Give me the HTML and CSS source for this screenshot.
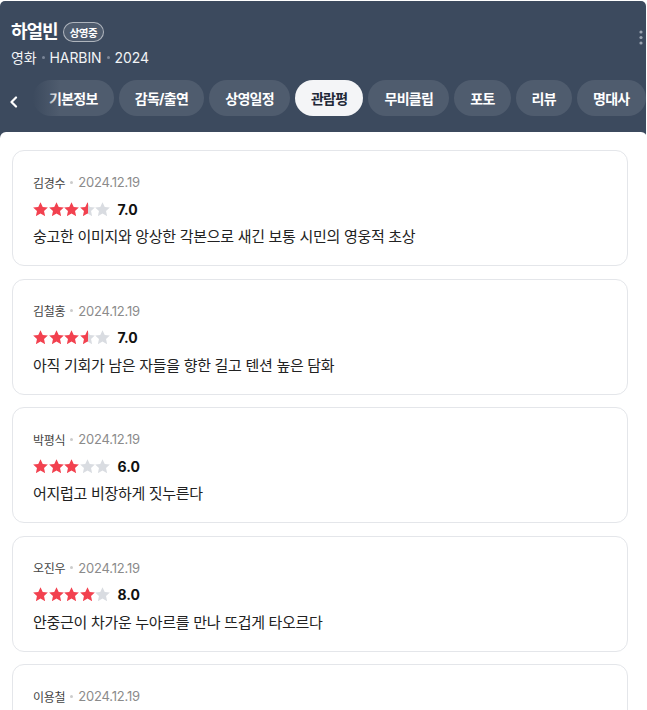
FILE: index.html
```html
<!DOCTYPE html>
<html lang="ko">
<head>
<meta charset="utf-8">
<title>하얼빈 관람평</title>
<link rel="stylesheet" href="styles.css">
</head>
<body>
<svg class="defs" width="0" height="0" aria-hidden="true">
  <defs>
    <linearGradient id="half" x1="0" x2="1" y1="0" y2="0">
      <stop offset="50%" stop-color="#f2414f"/>
      <stop offset="50%" stop-color="#d9dce1"/>
    </linearGradient>
    <symbol id="star" viewBox="1.6 1.4 20.8 20">
      <path d="M12 1.6l3.1 6.6 7.1.8-5.3 4.9 1.5 7.1L12 17.4 5.6 21l1.5-7.1L1.8 9l7.1-.8z"/>
    </symbol>
  </defs>
</svg>

<header class="header">
  <div class="header-top">
    <div class="heading">
      <div class="title-row">
        <h1 class="title">하얼빈</h1>
        <span class="badge">상영중</span>
      </div>
      <div class="subtitle">
        <span>영화</span><span class="sep"></span><span>HARBIN</span><span class="sep"></span><span>2024</span>
      </div>
    </div>
    <button class="kebab" aria-label="더보기">
      <svg width="4" height="15" viewBox="0 0 4 15"><circle cx="2" cy="2" r="1.6"/><circle cx="2" cy="7.5" r="1.6"/><circle cx="2" cy="13" r="1.6"/></svg>
    </button>
  </div>
  <nav class="tabs">
    <button class="prev" aria-label="이전">
      <svg width="10" height="12" viewBox="0 0 10 12"><path d="M7 1.5L2.5 6 7 10.5" fill="none" stroke="#fff" stroke-width="2.2" stroke-linecap="round" stroke-linejoin="round"/></svg>
    </button>
    <div class="strip">
      <span class="pill">기본정보</span>
      <span class="pill">감독/출연</span>
      <span class="pill">상영일정</span>
      <span class="pill active">관람평</span>
      <span class="pill">무비클립</span>
      <span class="pill">포토</span>
      <span class="pill">리뷰</span>
      <span class="pill">명대사</span>
    </div>
    <div class="fade"></div>
  </nav>
</header>

<main class="content">
  <article class="card">
    <div class="meta"><span class="name">김경수</span><span class="dot"></span><span class="date">2024.12.19</span></div>
    <div class="rating">
      <svg class="star full"><use href="#star"/></svg><svg class="star full"><use href="#star"/></svg><svg class="star full"><use href="#star"/></svg><svg class="star half"><use href="#star"/></svg><svg class="star empty"><use href="#star"/></svg>
      <span class="score">7.0</span>
    </div>
    <p class="text">숭고한 이미지와 앙상한 각본으로 새긴 보통 시민의 영웅적 초상</p>
  </article>
  <article class="card">
    <div class="meta"><span class="name">김철홍</span><span class="dot"></span><span class="date">2024.12.19</span></div>
    <div class="rating">
      <svg class="star full"><use href="#star"/></svg><svg class="star full"><use href="#star"/></svg><svg class="star full"><use href="#star"/></svg><svg class="star half"><use href="#star"/></svg><svg class="star empty"><use href="#star"/></svg>
      <span class="score">7.0</span>
    </div>
    <p class="text">아직 기회가 남은 자들을 향한 길고 텐션 높은 담화</p>
  </article>
  <article class="card">
    <div class="meta"><span class="name">박평식</span><span class="dot"></span><span class="date">2024.12.19</span></div>
    <div class="rating">
      <svg class="star full"><use href="#star"/></svg><svg class="star full"><use href="#star"/></svg><svg class="star full"><use href="#star"/></svg><svg class="star empty"><use href="#star"/></svg><svg class="star empty"><use href="#star"/></svg>
      <span class="score">6.0</span>
    </div>
    <p class="text">어지럽고 비장하게 짓누른다</p>
  </article>
  <article class="card">
    <div class="meta"><span class="name">오진우</span><span class="dot"></span><span class="date">2024.12.19</span></div>
    <div class="rating">
      <svg class="star full"><use href="#star"/></svg><svg class="star full"><use href="#star"/></svg><svg class="star full"><use href="#star"/></svg><svg class="star full"><use href="#star"/></svg><svg class="star empty"><use href="#star"/></svg>
      <span class="score">8.0</span>
    </div>
    <p class="text">안중근이 차가운 누아르를 만나 뜨겁게 타오르다</p>
  </article>
  <article class="card">
    <div class="meta"><span class="name">이용철</span><span class="dot"></span><span class="date">2024.12.19</span></div>
    <div class="rating">
      <svg class="star full"><use href="#star"/></svg><svg class="star full"><use href="#star"/></svg><svg class="star full"><use href="#star"/></svg><svg class="star empty"><use href="#star"/></svg><svg class="star empty"><use href="#star"/></svg>
      <span class="score">6.0</span>
    </div>
    <p class="text">무겁고 진지한 영웅의 초상</p>
  </article>
</main>
</body>
</html>
```

FILE: styles.css
```css
* { box-sizing: border-box; }

html, body {
  margin: 0;
  padding: 0;
  background: #fff;
}

body {
  font-family: Inter, "Noto Sans CJK KR", sans-serif;
  color: #222;
  overflow: hidden;
}

.defs {
  position: absolute;
  width: 0;
  height: 0;
}

button {
  font: inherit;
  border: 0;
  background: none;
  padding: 0;
  cursor: pointer;
}

.header {
  margin: 1px 1px 0 0;
  background: #3c4a5e;
  border-radius: 5px 5px 0 0;
  padding: 19px 0 22px;
}

.header-top {
  display: flex;
  justify-content: space-between;
  align-items: flex-start;
}

.heading {
  padding-left: 11px;
}

.title-row {
  display: flex;
  align-items: center;
  gap: 5px;
  height: 24px;
}

.title {
  margin: 0;
  font-size: 18px;
  font-weight: 700;
  letter-spacing: -1px;
  color: #fff;
  line-height: 24px;
}

.badge {
  display: inline-flex;
  align-items: center;
  height: 20px;
  padding: 0 6px;
  border: 1.5px solid rgba(255, 255, 255, 0.55);
  border-radius: 10px;
  background: rgba(255, 255, 255, 0.1);
  color: #fff;
  font-size: 10.5px;
  font-weight: 700;
  letter-spacing: -0.5px;
}

.subtitle {
  display: flex;
  align-items: center;
  margin-top: 3px;
  height: 20px;
  font-size: 14px;
  color: #f1f3f5;
  letter-spacing: -0.1px;
}

.sep {
  width: 3px;
  height: 3px;
  border-radius: 50%;
  background: #7a8597;
  margin: 0 5px;
}

.kebab {
  display: flex;
  margin: 10px 3px 0 0;
  fill: #9aa3b0;
}

.tabs {
  position: relative;
  display: flex;
  align-items: center;
  margin-top: 13px;
  height: 36px;
}

.prev {
  flex: 0 0 33px;
  display: flex;
  justify-content: flex-start;
  padding: 7px 0 0 9px;
}

.strip {
  display: flex;
  gap: 5px;
  overflow: hidden;
  flex: 1;
}

.pill {
  flex-shrink: 0;
  display: inline-flex;
  align-items: center;
  height: 36px;
  padding: 0 16px;
  border-radius: 18px;
  background: rgba(255, 255, 255, 0.1);
  color: #fff;
  font-size: 14px;
  font-weight: 700;
  letter-spacing: -0.7px;
}

.pill.active {
  background: #f4f5f7;
  color: #1f2937;
}

.fade {
  position: absolute;
  left: 30px;
  top: 0;
  width: 30px;
  height: 36px;
  background: linear-gradient(to right, #3c4a5e 10%, rgba(60, 74, 94, 0));
}

.content {
  position: relative;
  margin-top: -6px;
  background: #fff;
  border-radius: 6px 6px 0 0;
  padding: 18px 19px 0 12px;
  display: flex;
  flex-direction: column;
  gap: 12.5px;
}

.card {
  border: 1px solid #e4e6ea;
  border-radius: 12px;
  padding: 20px 20px 17px;
}

.meta {
  display: flex;
  align-items: center;
  height: 22px;
  font-size: 12px;
}

.name {
  color: #444;
  letter-spacing: -0.3px;
}

.dot {
  width: 3px;
  height: 3px;
  border-radius: 50%;
  background: #ccc;
  margin: 0 5px;
}

.date {
  color: #8b8b8b;
  font-size: 13px;
  letter-spacing: -0.2px;
}

.rating {
  display: flex;
  align-items: center;
  gap: 0.5px;
  height: 20px;
  margin-top: 6px;
}

.star {
  width: 15px;
  height: 14.5px;
}

.star.full { fill: #f2414f; }
.star.empty { fill: #d9dce1; }
.star.half { fill: url(#half); }

.score {
  margin-left: 7px;
  font-size: 14px;
  font-weight: 700;
  color: #111;
}

.text {
  margin: 7px 0 0;
  font-size: 15px;
  line-height: 22px;
  letter-spacing: -0.3px;
  color: #222;
}
```
